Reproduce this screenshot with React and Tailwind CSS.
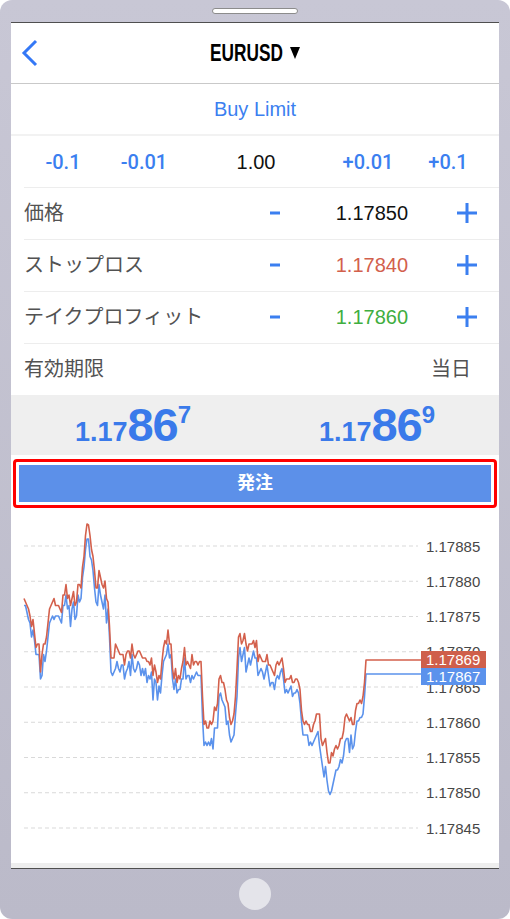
import React from 'react';

const RED = '#d3604c';
const BLUE = '#5b92ec';

// right axis levels, top to bottom
const LEVELS = ['1.17885', '1.17880', '1.17875', '1.17870', '1.17865', '1.17860', '1.17855', '1.17850', '1.17845'];
const GRID_TOP = 546;
const GRID_STEP = 35.25;

// rough shape of the ask line (x, y in page px)
const redKeys = [
  [24, 597], [27, 603], [30, 617], [34, 618], [35, 645], [39, 646], [40, 672], [42, 655], [45, 645], [48, 622],
  [51, 605], [54, 600], [57, 608], [60, 606], [63, 600], [66, 590], [68, 598], [71, 604], [73, 594], [75, 610],
  [77, 596], [79, 582], [81, 588], [83, 560], [85, 545], [86, 524], [89, 524], [91, 545], [94, 565], [96, 585],
  [99, 572], [101, 575], [104, 590], [107, 598], [109, 600], [110, 652], [113, 660], [116, 652], [122, 655],
  [128, 652], [134, 658], [140, 652], [146, 660], [150, 665], [154, 672], [157, 688], [160, 682], [163, 650],
  [166, 635], [168, 632], [171, 648], [174, 680], [177, 680], [180, 672], [184, 660], [188, 662], [192, 660],
  [196, 665], [200, 662], [202, 665], [203, 722], [206, 733], [209, 726], [212, 722], [215, 710], [218, 700],
  [220, 678], [223, 683], [226, 695], [229, 712], [232, 728], [234, 715], [236, 690], [238, 640], [240, 633],
  [242, 648], [244, 633], [247, 650], [251, 645], [255, 643], [258, 655], [262, 660], [266, 660], [270, 665],
  [274, 672], [278, 662], [282, 657], [285, 678], [290, 680], [298, 681], [300, 690], [303, 722], [308, 728],
  [312, 727], [316, 715], [320, 720], [322, 748], [325, 740], [328, 765], [331, 757], [334, 752], [338, 745],
  [341, 740], [344, 727], [347, 710], [350, 722], [354, 722], [357, 702], [361, 700], [364, 690], [366, 662],
  [367, 660],
];

// distance from ask down to bid
const gapKeys = [
  [24, 6], [34, 10], [40, 8], [50, 12], [70, 10], [86, 12], [100, 16], [109, 10], [112, 16], [150, 12],
  [165, 14], [180, 12], [200, 12], [203, 18], [215, 16], [230, 20], [238, 18], [250, 14], [280, 12],
  [300, 12], [310, 14], [320, 20], [330, 30], [340, 22], [355, 20], [362, 16], [366, 14], [367, 14],
];

function makeRand(seed) {
  return function () {
    seed |= 0;
    seed = (seed + 0x6d2b79f5) | 0;
    let t = Math.imul(seed ^ (seed >>> 15), 1 | seed);
    t = (t + Math.imul(t ^ (t >>> 7), 61 | t)) ^ t;
    return ((t ^ (t >>> 14)) >>> 0) / 4294967296;
  };
}

function lerp(keys, x) {
  for (let i = 1; i < keys.length; i++) {
    if (x <= keys[i][0]) {
      const [x0, y0] = keys[i - 1];
      const [x1, y1] = keys[i];
      return y0 + ((y1 - y0) * (x - x0)) / (x1 - x0);
    }
  }
  return keys[keys.length - 1][1];
}

const q = (v) => Math.round(v / 3.5) * 3.5;

function buildPaths() {
  const rand = makeRand(11);
  const red = [];
  const blue = [];
  for (let x = 24; x <= 365; x += 1.5) {
    let y = lerp(redKeys, x) + (rand() - 0.5) * 8;
    if (rand() < 0.14) y += rand() < 0.5 ? -8 : 8;
    const yr = Math.max(524, q(y));
    let g = lerp(gapKeys, x) + (rand() - 0.5) * 7;
    if (rand() < 0.1) g += 9;
    const yb = Math.min(797, q(yr + g));
    red.push(`${x},${yr}`);
    blue.push(`${x},${yb}`);
  }
  red.push('366,660', '367,660', '421,660');
  blue.push('366,674', '367,674', '421,674');
  return { red: red.join(' '), blue: blue.join(' ') };
}

const paths = buildPaths();

function Chart() {
  return (
    <svg width="488" height="353" viewBox="11 510 488 353" className="block">
      {LEVELS.map((lv, i) => {
        const y = GRID_TOP + i * GRID_STEP;
        return (
          <g key={lv}>
            <line x1="24" x2="418" y1={y} y2={y} stroke="#d9d9d9" strokeWidth="1" strokeDasharray="4 3" />
            <text x="426" y={y + 5.5} fontSize="15" fill="#474747" fontFamily="Liberation Sans, Arial, sans-serif">
              {lv}
            </text>
          </g>
        );
      })}
      <polyline points={paths.blue} fill="none" stroke={BLUE} strokeWidth="1.6" strokeLinejoin="round" />
      <polyline points={paths.red} fill="none" stroke={RED} strokeWidth="1.6" strokeLinejoin="round" />
      <rect x="421" y="651" width="65" height="17" fill="#cf5f4b" />
      <text x="426" y="665" fontSize="15" fill="#fff" fontFamily="Liberation Sans, Arial, sans-serif">1.17869</text>
      <rect x="421" y="668" width="65" height="17" fill="#5b92ec" />
      <text x="426" y="682" fontSize="15" fill="#fff" fontFamily="Liberation Sans, Arial, sans-serif">1.17867</text>
    </svg>
  );
}

function Minus() {
  return (
    <svg width="12" height="4" viewBox="0 0 12 4">
      <rect x="1" y="0.5" width="10" height="3" fill="#3b7ff0" />
    </svg>
  );
}

function Plus() {
  return (
    <svg width="20" height="20" viewBox="0 0 20 20">
      <rect x="0" y="8.5" width="20" height="3" fill="#3b7ff0" />
      <rect x="8.5" y="0" width="3" height="20" fill="#3b7ff0" />
    </svg>
  );
}

function PriceRow({ label, value, color }) {
  return (
    <div className="pl-[13px] h-[52px]">
      <div className="flex items-center h-full border-b border-[#ededed]">
        <div className="flex-1 text-[20px] text-[#525252]">{label}</div>
        <div className="w-[30px] flex justify-center"><Minus /></div>
        <div className={`w-[118px] text-right text-[20px] ${color}`}>{value}</div>
        <div className="w-[40px]" />
        <div className="w-[38px] flex justify-center"><Plus /></div>
        <div className="w-[13px]" />
      </div>
    </div>
  );
}

function BigPrice({ head, big, tail }) {
  return (
    <div className="flex-1 text-center text-[#3a7aea] font-bold leading-none whitespace-nowrap">
      <span className="text-[27px]">{head}</span>
      <span className="text-[47px] tracking-[-1px]">{big}</span>
      <span className="text-[24px] align-[18px]">{tail}</span>
    </div>
  );
}

const step = "font-['Roboto'] font-medium text-[#3b7ff0]";

export default function App() {
  return (
    <div className="w-[510px] h-[919px] bg-white font-['Liberation_Sans','Noto_Sans_CJK_JP',sans-serif]">
      <div className="h-full flex flex-col px-[11px] rounded-[12px] bg-linear-to-b from-[#c8c7d5] to-[#bbbac9]">
        {/* top bezel */}
        <div className="h-[22px] flex items-center justify-center">
          <div className="w-[86px] h-[6px] rounded-full bg-white border border-[#8c8c8c]" />
        </div>

        {/* screen */}
        <div className="flex-1 flex flex-col bg-white border-t border-b border-[#4f4f4f]">
          <div className="h-[61px] flex items-center relative border-b border-[#c9c9c9]">
            <svg width="20" height="30" viewBox="0 0 20 30" className="ml-[10px]">
              <polyline points="15,3 3,15 15,27" fill="none" stroke="#3478f6" strokeWidth="3" />
            </svg>
            <div className="absolute inset-0 flex items-center justify-center pointer-events-none">
              <div className="w-[73px] h-[28px] overflow-visible">
                <span className="inline-block origin-left scale-x-75 whitespace-nowrap text-[23px] leading-[28px] font-bold text-black">
                  EURUSD
                </span>
              </div>
              <svg width="10" height="12" viewBox="0 0 10 12" className="ml-[7px]">
                <polygon points="0,0 10,0 5,12" fill="#000" />
              </svg>
            </div>
          </div>

          <div className="h-[50px] flex items-center justify-center text-[20px] text-[#3b7ff0]">Buy Limit</div>
          <div className="h-[2px] bg-[#f2f2f2]" />

          <div className="pl-[13px] h-[52px]">
            <div className="h-full pt-[2px] border-b border-[#ededed] grid grid-cols-[78px_84px_140px_84px_76px] items-center text-center text-[20px]">
              <div className={step}>-0.1</div>
              <div className={step}>-0.01</div>
              <div className="text-[#111]">1.00</div>
              <div className={step}>+0.01</div>
              <div className={step}>+0.1</div>
            </div>
          </div>

          <PriceRow label="価格" value="1.17850" color="text-[#111]" />
          <PriceRow label="ストップロス" value="1.17840" color="text-[#d2604c]" />
          <PriceRow label="テイクプロフィット" value="1.17860" color="text-[#3fae3f]" />

          <div className="h-[51px] flex items-center pl-[13px] pr-[28px] text-[20px] text-[#525252]">
            <div className="flex-1">有効期限</div>
            <div>当日</div>
          </div>

          <div className="h-[60px] bg-[#efefef] flex items-end pb-[7px]">
            <BigPrice head="1.17" big="86" tail="7" />
            <BigPrice head="1.17" big="86" tail="9" />
          </div>

          <div className="h-[55px] pt-[4px] pb-[2px] px-[2px]">
            <div className="h-[49px] border-[3px] border-[#ff0000] rounded-[4px] p-[3px]">
              <div className="h-full bg-[#5c90e9] flex items-center justify-center text-white font-bold text-[18px]">
                発注
              </div>
            </div>
          </div>

          <div className="flex-1">
            <Chart />
          </div>
          <div className="h-[5px] bg-[#eeeeee]" />
        </div>

        {/* bottom bezel */}
        <div className="h-[51px] flex items-center justify-center">
          <div className="w-[32px] h-[32px] rounded-full bg-[#e4e4ea]" />
        </div>
      </div>
    </div>
  );
}
